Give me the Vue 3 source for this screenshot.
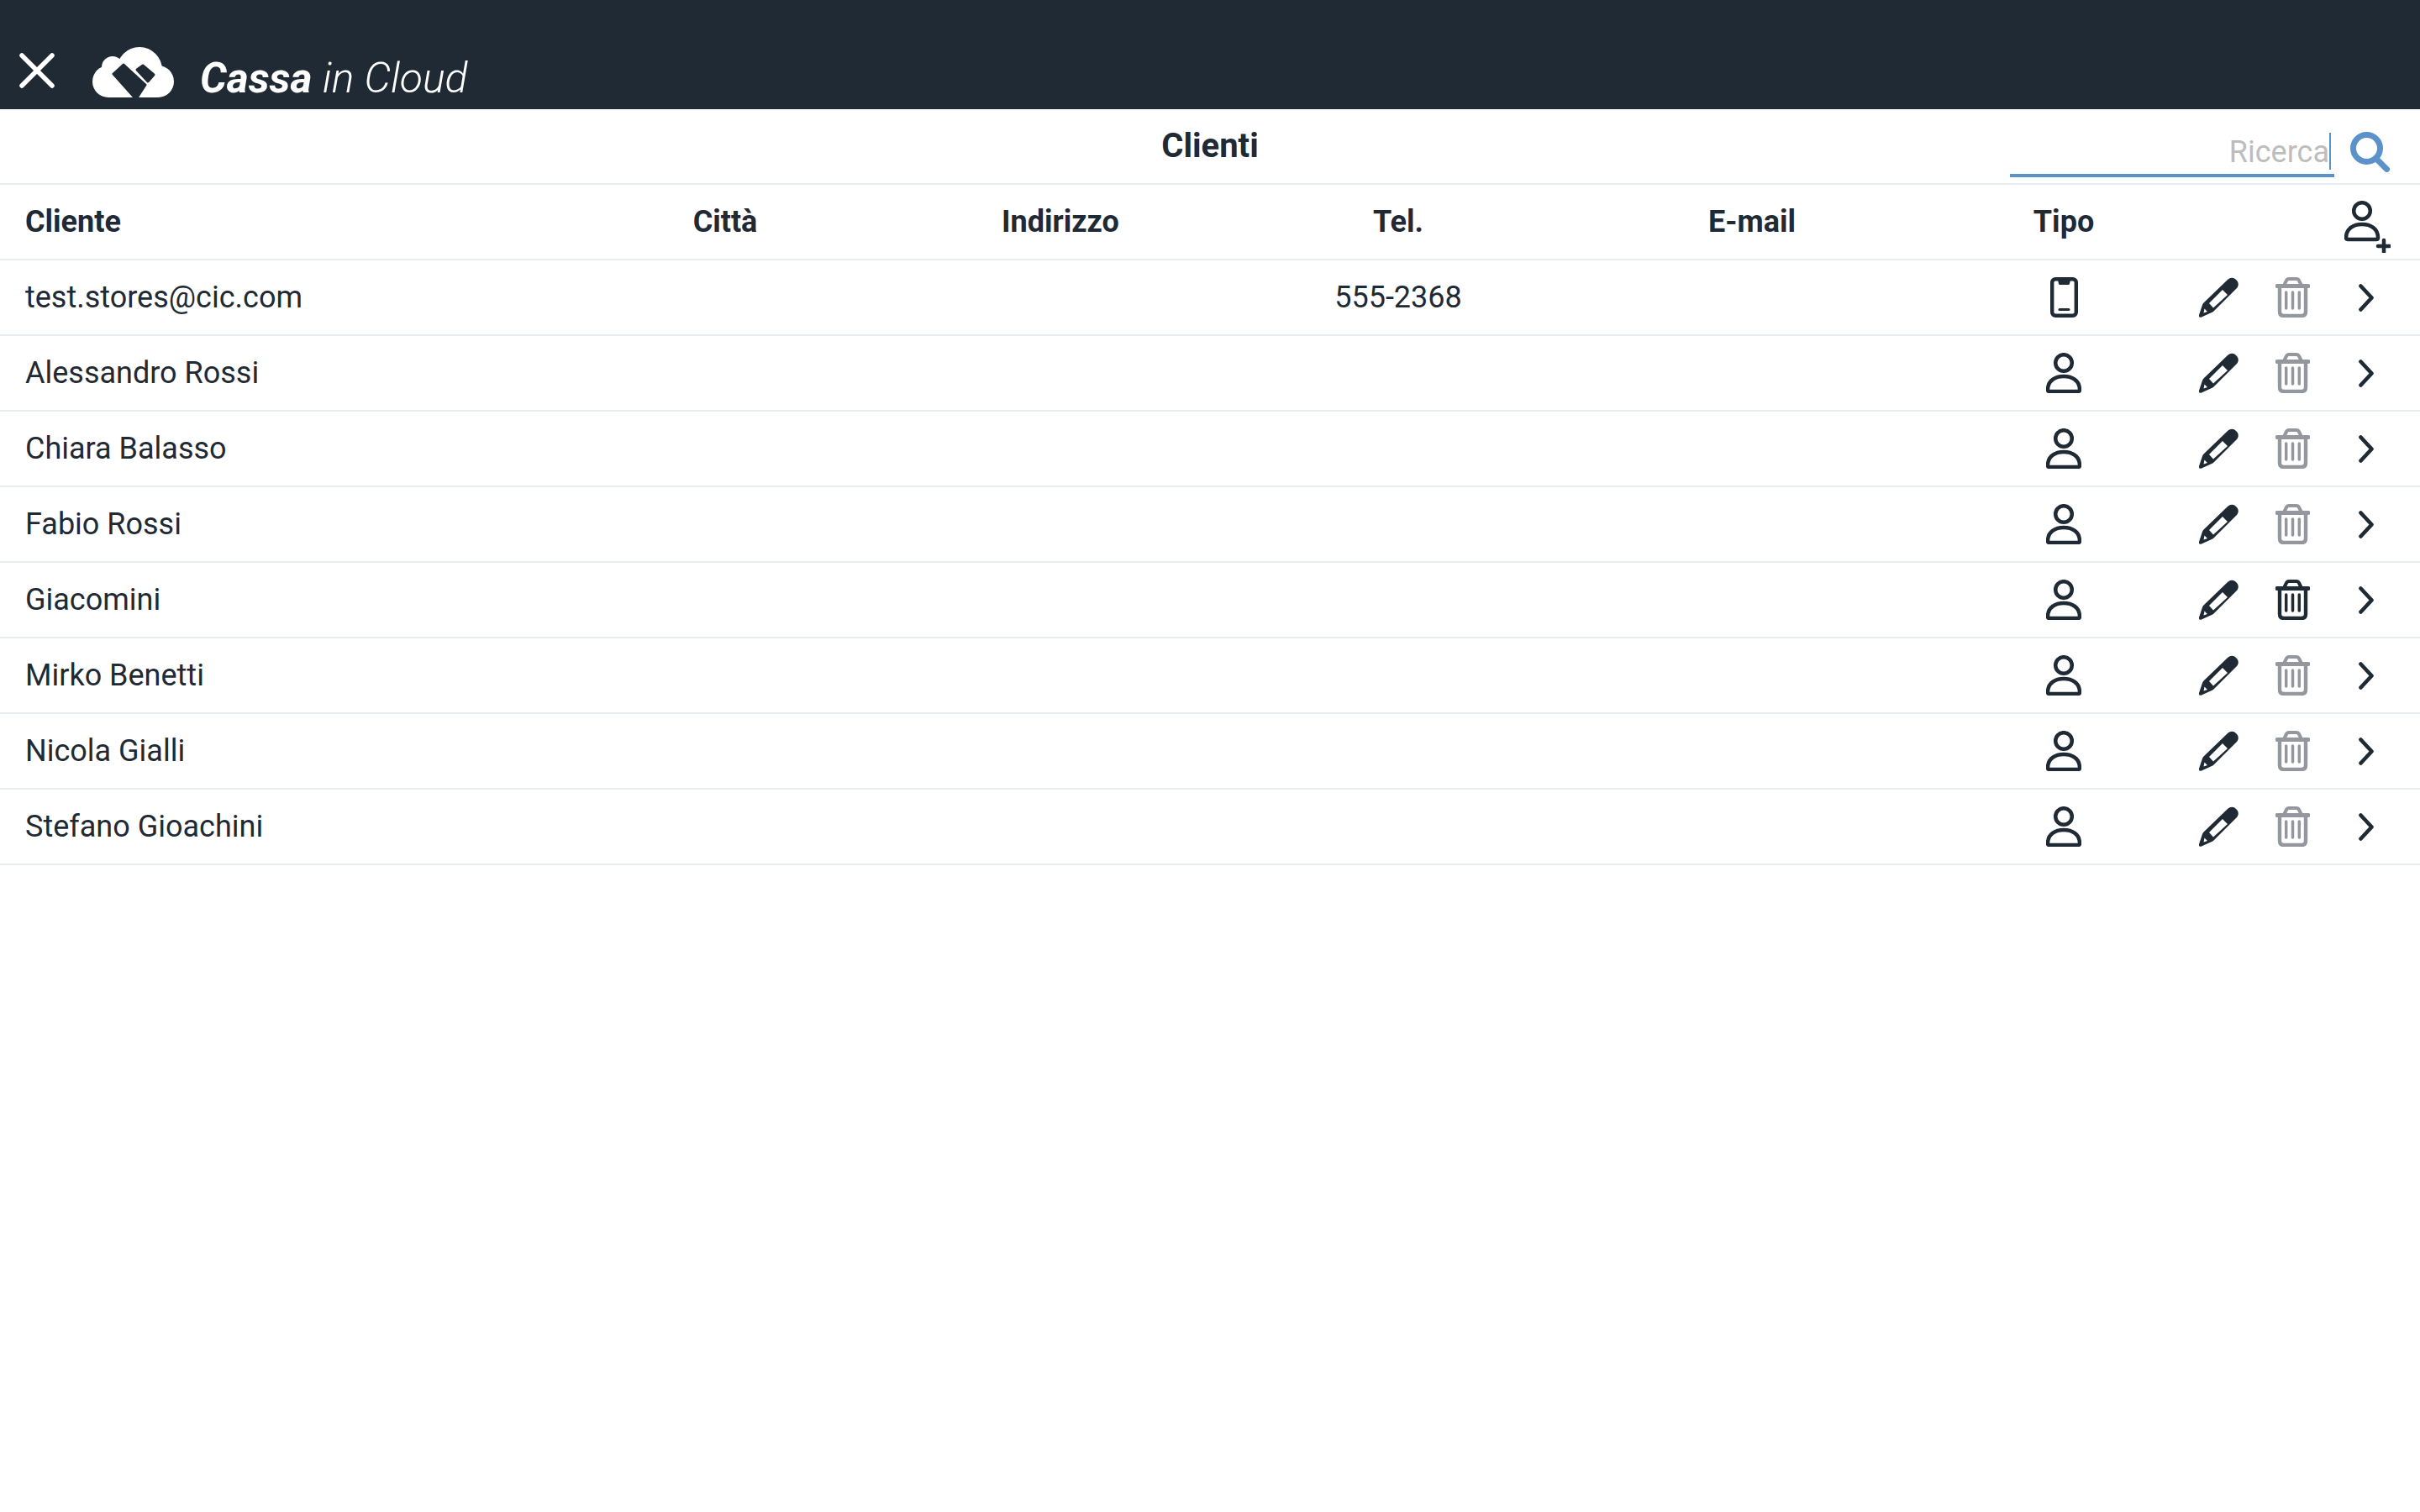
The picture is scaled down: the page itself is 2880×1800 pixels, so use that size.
<script setup>
const clients = [
  { name: 'test.stores@cic.com', tel: '555-2368', type: 'phone' },
  { name: 'Alessandro Rossi', tel: '', type: 'person' },
  { name: 'Chiara Balasso', tel: '', type: 'person' },
  { name: 'Fabio Rossi', tel: '', type: 'person' },
  { name: 'Giacomini', tel: '', type: 'person', canDelete: true },
  { name: 'Mirko Benetti', tel: '', type: 'person' },
  { name: 'Nicola Gialli', tel: '', type: 'person' },
  { name: 'Stefano Gioachini', tel: '', type: 'person' },
]
</script>

<template>
  <div class="page">
    <header class="topbar">
      <svg class="close" viewBox="0 0 42 42" fill="none">
        <path d="M3 3 L39 39 M39 3 L3 39" stroke="#fff" stroke-width="5.5" stroke-linecap="round" />
      </svg>
      <svg class="cloud" viewBox="0 0 97 60">
        <g fill="#fff">
          <circle cx="56" cy="27" r="27" />
          <circle cx="24" cy="24" r="13" />
          <circle cx="19" cy="41" r="19" />
          <circle cx="78" cy="41" r="19" />
          <rect x="19" y="30" width="59" height="30" />
        </g>
        <g fill="#1f2a35" stroke="#1f2a35" stroke-width="3" stroke-linejoin="round">
          <path d="M37 21 L25 32 L50 60 L50 62 L52 62 L63 45 Z" />
          <path d="M60 22 L53 27 L66 41 L73 33 Z" />
        </g>
      </svg>
      <span class="brand"><b>Cassa</b> <i>in Cloud</i></span>
    </header>

    <div class="titlebar">
      <span></span>
      <h1>Clienti</h1>
      <div class="search">
        <div class="search-field"><span class="placeholder">Ricerca</span><span class="caret"></span></div>
        <svg class="search-icon" viewBox="0 0 48 48" fill="none">
          <circle cx="19.5" cy="19.5" r="16" stroke="#5b92ca" stroke-width="7" />
          <path d="M31 32 L43.5 44.5" stroke="#5b92ca" stroke-width="7" stroke-linecap="round" />
        </svg>
      </div>
    </div>

    <div class="row head">
      <div class="c-name">Cliente</div>
      <div>Città</div>
      <div>Indirizzo</div>
      <div>Tel.</div>
      <div>E-mail</div>
      <div>Tipo</div>
      <div class="actions add">
        <svg class="add-icon" viewBox="0 0 55 62" fill="none" stroke="#1f2a35">
          <circle cx="21" cy="12" r="9.8" stroke-width="4.5" />
          <path d="M4 46 Q2 46 2 44 C2 33 11 28 21 28 C31 28 40 33 40 44 Q40 46 38 46 Z" stroke-width="4.5" stroke-linejoin="round" />
          <path d="M47 47 V61 M40 54 H54" stroke-width="4.5" stroke-linecap="round" />
        </svg>
      </div>
    </div>

    <div v-for="c in clients" :key="c.name" class="row">
      <div class="c-name">{{ c.name }}</div>
      <div></div>
      <div></div>
      <div>{{ c.tel }}</div>
      <div></div>
      <div class="type">
        <svg v-if="c.type === 'phone'" class="i-phone" viewBox="0 0 33 48" fill="none" stroke="#1f2a35">
          <rect x="2.2" y="2.2" width="28.6" height="43.6" rx="4" stroke-width="4.4" />
          <path d="M9 3 H24 L23 8 Q22.6 9 21.5 9 H11.5 Q10.4 9 10 8 Z" fill="#1f2a35" stroke="none" />
          <path d="M11 38.5 H22" stroke-width="3" stroke-linecap="round" />
        </svg>
        <svg v-else class="i-person" viewBox="0 0 42 48" fill="none" stroke="#1f2a35">
          <circle cx="21" cy="12" r="9.8" stroke-width="4.5" />
          <path d="M4 46 Q2 46 2 44 C2 33 11 28 21 28 C31 28 40 33 40 44 Q40 46 38 46 Z" stroke-width="4.5" stroke-linejoin="round" />
        </svg>
      </div>
      <div class="actions">
        <span class="slot">
          <svg class="i-pencil" viewBox="0 0 47 48">
            <path fill="#1f2a35" fill-rule="evenodd" d="M33 4 C37 0 41 0 44 3 C47.5 6 47.5 10 45 13 L18 40 Q16.5 41.5 14 42.5 L3 47.5 Q-0.5 48.5 0 45 L4 33 Q4.5 31.5 6 30 Z M28 15 L12 31 L17 36.5 L34 21 Z M6.5 37.5 L10 41 L5.5 42.5 Z" />
          </svg>
        </span>
        <span class="slot">
          <svg class="i-trash" :class="{ on: c.canDelete }" viewBox="0 0 41 48" fill="none" stroke="currentColor">
            <path d="M2 10.5 H39" stroke-width="5" stroke-linecap="round" />
            <path d="M10.5 9 L13 4 Q14 2 16 2 H25 Q27 2 28 4 L30.5 9" stroke-width="4" />
            <path d="M5 11 V41 Q5 46 10 46 H31 Q36 46 36 41 V11" stroke-width="4.4" />
            <path d="M12.7 18 V37 M20.5 18 V37 M28.3 18 V37" stroke-width="3.5" stroke-linecap="round" />
          </svg>
        </span>
        <span class="slot">
          <svg class="i-chevron" viewBox="0 0 18 33" fill="none">
            <path d="M2.5 2.5 L15.5 16.5 L2.5 30.5" stroke="#1f2a35" stroke-width="4.6" stroke-linecap="round" stroke-linejoin="round" />
          </svg>
        </span>
      </div>
    </div>
  </div>
</template>

<style>
html,
body {
  margin: 0;
  background: #fff;
}
</style>

<style scoped>
.page {
  min-height: 1800px;
  font-family: Roboto, "Liberation Sans", sans-serif;
  color: #1f2a35;
  background: #fff;
}

.topbar {
  height: 130px;
  box-sizing: border-box;
  background: #1f2a35;
  display: flex;
  align-items: flex-end;
  padding: 0 0 14px 23px;
}

.close {
  width: 42px;
  height: 42px;
  margin-bottom: 11px;
}

.cloud {
  width: 97px;
  height: 60px;
  margin-left: 45px;
}

.brand {
  margin-left: 31px;
  font-size: 50px;
  line-height: 50px;
  color: #fff;
  font-style: italic;
  white-space: nowrap;
  margin-bottom: -2px;
}

.brand b {
  font-weight: 700;
}

.brand i {
  font-weight: 300;
}

.titlebar {
  height: 90px;
  box-sizing: border-box;
  border-bottom: 2px solid #e8ebef;
  display: grid;
  grid-template-columns: 1fr auto 1fr;
  align-items: center;
}

.titlebar h1 {
  margin: 0;
  font-size: 40px;
  font-weight: 700;
  line-height: 1;
}

.search {
  display: flex;
  justify-content: flex-end;
  align-items: flex-start;
  padding: 19px 35px 0 0;
}

.search-field {
  width: 386px;
  height: 54px;
  box-sizing: border-box;
  border-bottom: 4px solid #5b92ca;
  display: flex;
  justify-content: flex-end;
  align-items: flex-end;
  padding: 0 4px 5px 0;
}

.placeholder {
  font-size: 36px;
  line-height: 42px;
  color: #bdbdbd;
}

.caret {
  width: 2px;
  height: 44px;
  background: #5b92ca;
}

.search-icon {
  width: 48px;
  height: 48px;
  margin-left: 19px;
}

.row {
  display: grid;
  grid-template-columns: 660px 406px 392px 412px 430px 312px 268px;
  align-items: center;
  height: 90px;
  box-sizing: border-box;
  border-bottom: 2px solid #e8ebef;
  font-size: 36px;
  text-align: center;
}

.head {
  font-weight: 700;
}

.c-name {
  text-align: left;
  padding-left: 30px;
}

.type,
.slot {
  display: flex;
  justify-content: center;
  align-items: center;
}

.actions {
  display: flex;
  gap: 32px;
  padding-right: 36px;
}

.add {
  justify-content: flex-end;
  padding-right: 35px;
}

.add-icon {
  width: 55px;
  height: 62px;
  margin-top: 12px;
}

.slot {
  width: 56px;
}

.i-phone {
  width: 33px;
  height: 48px;
}

.i-person {
  width: 42px;
  height: 48px;
}

.i-pencil {
  width: 47px;
  height: 48px;
}

.i-trash {
  width: 41px;
  height: 48px;
  color: #94989e;
}

.i-trash.on {
  color: #1f2a35;
}

.i-chevron {
  width: 18px;
  height: 33px;
}
</style>
